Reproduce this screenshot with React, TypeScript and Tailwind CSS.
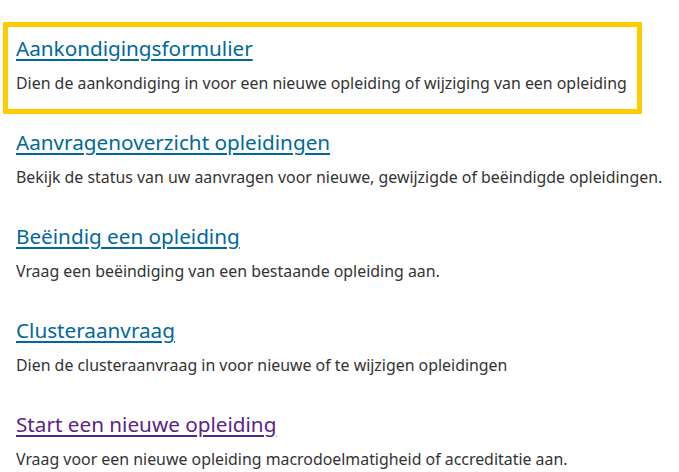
const items = [
  {
    title: "Aankondigingsformulier",
    text: "Dien de aankondiging in voor een nieuwe opleiding of wijziging van een opleiding",
    focus: true,
  },
  {
    title: "Aanvragenoverzicht opleidingen",
    text: "Bekijk de status van uw aanvragen voor nieuwe, gewijzigde of beëindigde opleidingen.",
  },
  {
    title: "Beëindig een opleiding",
    text: "Vraag een beëindiging van een bestaande opleiding aan.",
  },
  {
    title: "Clusteraanvraag",
    text: "Dien de clusteraanvraag in voor nieuwe of te wijzigen opleidingen",
  },
  {
    title: "Start een nieuwe opleiding",
    text: "Vraag voor een nieuwe opleiding macrodoelmatigheid of accreditatie aan.",
    visited: true,
  },
];

export default function App() {
  return (
    <div
      className="w-[679px] h-[472px] bg-white overflow-hidden pl-[3px] pt-[22px]"
      style={{ fontFamily: '"Noto Sans", "Open Sans", sans-serif' }}
    >
      <ul className="flex flex-col">
        {items.map((item) => (
          <li
            key={item.title}
            className={
              item.focus
                ? "w-[639px] h-[92px] border-[5px] border-[#ffcc00] px-2 pt-[7px] mb-[2px]"
                : "w-[639px] h-[94px] border-[5px] border-transparent px-2 pt-[7px]"
            }
          >
            <a
              href="#"
              className={
                item.visited
                  ? "text-[20.7px] leading-[28px] text-[#5a2487] underline decoration-[1.5px] underline-offset-[3px]"
                  : "text-[20.7px] leading-[28px] text-[#01689b] underline decoration-[1.5px] underline-offset-[3px]"
              }
            >
              {item.title}
            </a>
            <p className="mt-[10px] whitespace-nowrap text-[15.9px] leading-[22px] text-[#333333]">{item.text}</p>
          </li>
        ))}
      </ul>
    </div>
  );
}
